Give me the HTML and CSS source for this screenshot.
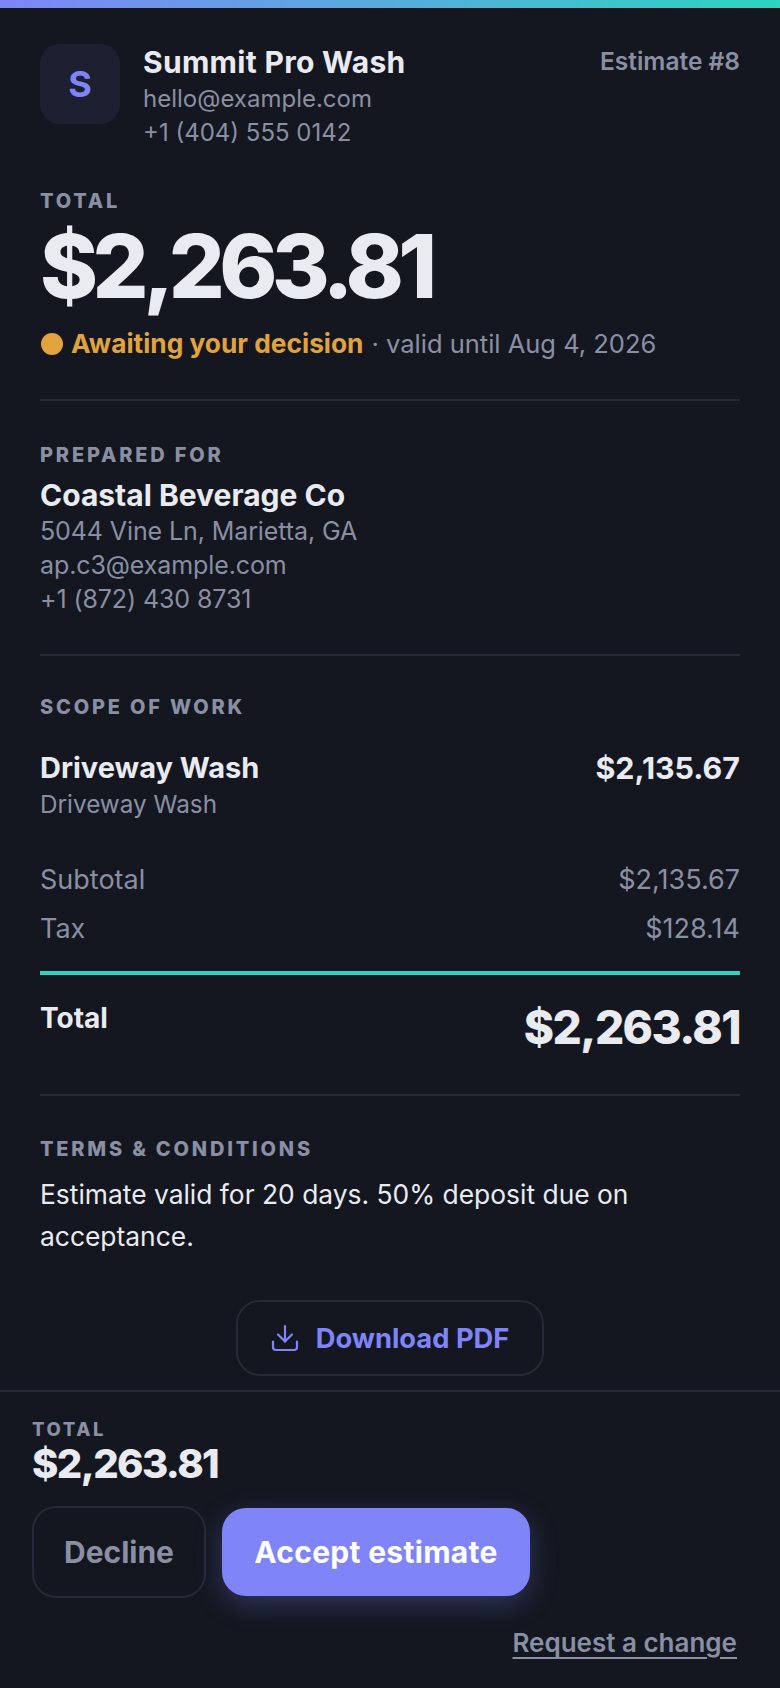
FILE: index.html
```html
<!DOCTYPE html>
<html lang="en">
<head>
<meta charset="utf-8">
<title>Estimate #8</title>
<link rel="stylesheet" href="styles.css">
</head>
<body>
<div class="accent"></div>
<main class="doc">
  <header class="head">
    <div class="logo">S</div>
    <div class="biz">
      <div class="biz-name">Summit Pro Wash</div>
      <div class="muted">hello@example.com</div>
      <div class="muted">+1 (404) 555 0142</div>
    </div>
    <div class="est-no">Estimate #8</div>
  </header>
  <section class="hero">
    <div class="label">TOTAL</div>
    <div class="hero-amt">$2,263.81</div>
    <div class="status"><span class="dot"></span><span class="await">Awaiting your decision</span><span class="valid">· valid until Aug 4, 2026</span></div>
  </section>
  <section class="sec prepared">
    <div class="label">PREPARED FOR</div>
    <div class="client">Coastal Beverage Co</div>
    <div class="muted large">5044 Vine Ln, Marietta, GA</div>
    <div class="muted large">ap.c3@example.com</div>
    <div class="muted large">+1 (872) 430 8731</div>
  </section>
  <section class="sec scope">
    <div class="label">SCOPE OF WORK</div>
    <div class="item">
      <div>
        <div class="item-name">Driveway Wash</div>
        <div class="item-desc">Driveway Wash</div>
      </div>
      <div class="item-price">$2,135.67</div>
    </div>
    <div class="row first"><span>Subtotal</span><span>$2,135.67</span></div>
    <div class="row"><span>Tax</span><span>$128.14</span></div>
    <div class="grand"><span class="grand-l">Total</span><span class="grand-v">$2,263.81</span></div>
  </section>
  <section class="sec terms">
    <div class="label">TERMS &amp; CONDITIONS</div>
    <p class="terms-text">Estimate valid for 20 days. 50% deposit due on acceptance.</p>
  </section>
  <div class="dl-wrap">
    <a class="dl">
      <svg class="dl-icon" viewBox="0 0 28 28" fill="none" stroke="currentColor" stroke-width="2.2" stroke-linecap="round" stroke-linejoin="round"><path d="M14 2v15.500"/><path d="M7 10.500l7 7 7-7"/><path d="M2 17.500v5.500a3 3 0 0 0 3 3h18a3 3 0 0 0 3-3v-5.500"/></svg>
      <span>Download PDF</span>
    </a>
  </div>
</main>
<footer class="bar">
  <div class="label">TOTAL</div>
  <div class="bar-amt">$2,263.81</div>
  <div class="actions">
    <button class="decline">Decline</button>
    <button class="accept">Accept estimate</button>
  </div>
  <div class="req-wrap"><a class="req">Request a change</a></div>
</footer>
</body>
</html>
```
FILE: styles.css
```css
* { box-sizing: border-box; }
html, body { margin: 0; padding: 0; }
body {
  width: 780px;
  height: 1688px;
  overflow: hidden;
  background: #141720;
  color: #e9ebf1;
  font-family: Inter, "Liberation Sans", sans-serif;
  font-size: 24px;
}
.accent { height: 8px; background: linear-gradient(90deg, #7f85f8, #2dd4bf); }
.doc { padding: 36px 40px 0; }
.head { display: flex; align-items: flex-start; }
.logo {
  width: 80px; height: 80px; border-radius: 20px;
  background: #1c2030; color: #7f85f8;
  display: flex; align-items: center; justify-content: center;
  font-size: 36px; font-weight: 700;
  margin-right: 23px; flex: none;
}
.biz { flex: 1; }
.biz-name { font-size: 30px; font-weight: 700; letter-spacing: .3px; line-height: 36px; margin-bottom: 2px; }
.muted { color: #8a8fa3; font-size: 24px; line-height: 34px; }
.muted.large { font-size: 25px; letter-spacing: -.1px; }
.est-no { color: #8a8fa3; font-size: 24.5px; font-weight: 600; line-height: 34px; }
.label { color: #8a8fa3; font-size: 20px; font-weight: 800; letter-spacing: 2.8px; line-height: 24px; }
.hero { margin-top: 39px; padding-bottom: 37px; }
.hero-amt { font-size: 88px; font-weight: 800; letter-spacing: -5.5px; line-height: 96px; margin-top: 5px; }
.status { display: flex; align-items: center; margin-top: 12px; line-height: 36px; font-size: 25.5px; }
.dot { width: 22px; height: 22px; border-radius: 50%; background: #e0a33e; margin-right: 8px; margin-left: 1px; }
.await { color: #e0a33e; font-weight: 700; font-size: 26.3px; }
.valid { color: #8a8fa3; margin-left: 8px; }
.sec { border-top: 2px solid #252a38; }
.prepared { padding-top: 42px; padding-bottom: 38px; }
.client { font-size: 30px; font-weight: 700; line-height: 38px; margin-top: 9px; }
.scope { padding-top: 39px; padding-bottom: 41px; }
.item { display: flex; justify-content: space-between; margin-top: 30px; }
.item-name { font-size: 29px; font-weight: 700; line-height: 38px; }
.item-desc { color: #8a8fa3; font-size: 24.3px; line-height: 35px; }
.item-price { font-size: 30.4px; font-weight: 700; line-height: 38px; }
.row { display: flex; justify-content: space-between; color: #8a8fa3; font-size: 27px; line-height: 34px; margin-top: 15px; }
.row.first { margin-top: 41px; }
.grand { display: flex; justify-content: space-between; align-items: flex-start; border-top: 4px solid #2dd4bf; margin-top: 25px; padding-top: 26px; }
.grand-l { font-size: 28px; font-weight: 700; line-height: 32px; margin-top: 1px; }
.grand-v { font-size: 46px; font-weight: 800; letter-spacing: -1.6px; line-height: 52px; }
.terms { padding-top: 41px; }
.terms-text { margin: 12px 0 0; font-size: 26.4px; line-height: 42px; color: #e9ebf1; }
.dl-wrap { display: flex; justify-content: center; margin-top: 43px; }
.dl {
  display: flex; align-items: center; gap: 17px;
  height: 76px; padding: 0 33px;
  border: 2px solid #252a38; border-radius: 24px;
  color: #7f85f8; font-size: 27.3px; font-weight: 700;
}
.dl-icon { width: 28px; height: 28px; }
.bar {
  position: absolute; left: 0; right: 0; top: 1390px; bottom: 0;
  border-top: 2px solid #252a38;
  padding: 25px 43px 0 32px;
}
.bar .label { font-size: 18.5px; letter-spacing: 2.6px; }
.bar-amt { font-size: 40px; font-weight: 800; letter-spacing: -1.6px; line-height: 44px; margin-top: 1px; }
.actions { display: flex; align-items: center; gap: 16px; margin-top: 20px; }
button { font-family: inherit; font-size: 30px; font-weight: 700; }
.decline {
  width: 174px; height: 92px; background: transparent;
  border: 2px solid #252a38; border-radius: 24px; color: #8a8fa3;
}
.accept {
  width: 308px; height: 88px; background: #7f85f8; border: 0;
  border-radius: 24px; color: #fff; letter-spacing: .3px;
  box-shadow: 0 8px 28px rgba(127,133,248,.28);
}
.req-wrap { display: flex; justify-content: flex-end; margin-top: 29px; }
.req { color: #8a8fa3; font-size: 26px; font-weight: 600; text-decoration: underline; text-underline-offset: 5px; }
```
